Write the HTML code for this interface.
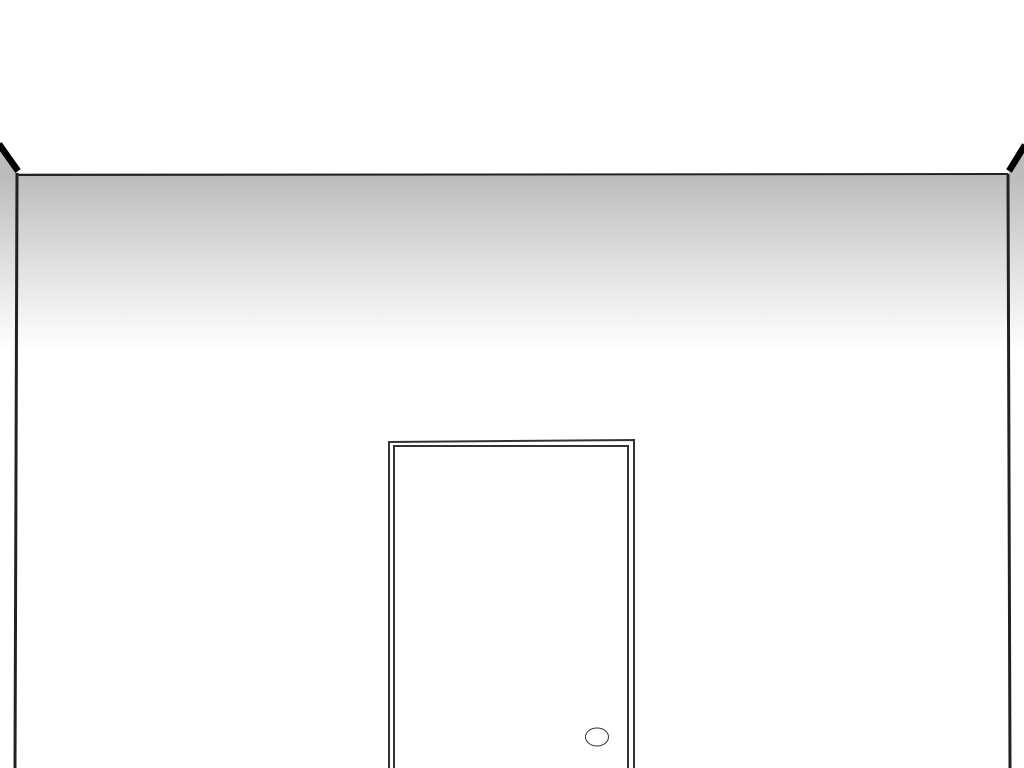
<!DOCTYPE html>
<html><head><style>html,body{margin:0;padding:0;background:#fff;overflow:hidden}</style></head>
<body>
<svg width="1024" height="768" viewBox="0 0 1024 768" xmlns="http://www.w3.org/2000/svg" style="display:block">
<defs>
<linearGradient id="g" gradientUnits="userSpaceOnUse" x1="0" y1="176" x2="0" y2="352">
<stop offset="0" stop-color="#bcbcbc"/>
<stop offset="0.5" stop-color="#e0e0e0"/>
<stop offset="1" stop-color="#ffffff"/>
</linearGradient>
</defs>
<rect width="1024" height="768" fill="#fff"/>
<polygon points="0,145 18,173 1008,174 1024,147 1024,768 0,768" fill="url(#g)"/>
<line x1="-1" y1="144" x2="18" y2="171" stroke="#000" stroke-width="6.5"/>
<line x1="1025" y1="145" x2="1009" y2="171" stroke="#000" stroke-width="6.5"/>
<line x1="17" y1="175" x2="1008" y2="174" stroke="#222" stroke-width="2"/>
<line x1="17" y1="173" x2="15" y2="768" stroke="#222" stroke-width="3"/>
<line x1="1008" y1="174" x2="1010" y2="768" stroke="#222" stroke-width="3"/>
<polyline points="389,768 389,442 634,440 634,768" fill="none" stroke="#333" stroke-width="2"/>
<polyline points="394,768 394,446 628,446 628,768" fill="none" stroke="#333" stroke-width="2"/>
<ellipse cx="597" cy="737" rx="11.5" ry="9" fill="#fff" stroke="#333" stroke-width="1"/>
</svg>
</body></html>
